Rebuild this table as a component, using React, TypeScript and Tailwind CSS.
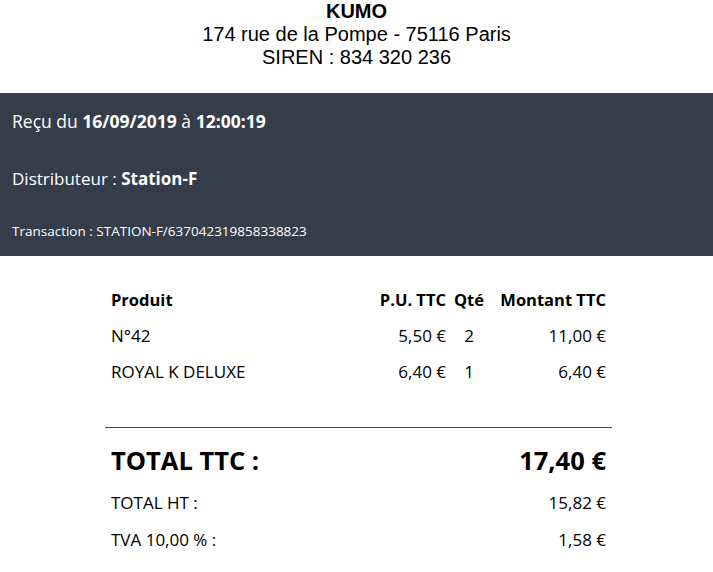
const items = [
  { name: "N°42", pu: "5,50 €", qty: "2", total: "11,00 €" },
  { name: "ROYAL K DELUXE", pu: "6,40 €", qty: "1", total: "6,40 €" },
];

const body = { fontFamily: "'Open Sans', Lato, sans-serif" };

const App = () => {
  return (
    <div className="w-[713px] h-[572px] bg-white text-black overflow-hidden">
      <div
        className="flex flex-col items-center text-[20px] leading-[23px]"
        style={{ fontFamily: "'Liberation Sans', Arial, sans-serif" }}
      >
        <p className="font-bold">KUMO</p>
        <p>174 rue de la Pompe - 75116 Paris</p>
        <p>SIREN : 834 320 236</p>
      </div>

      <div className="mt-[24px] bg-[#343d4a] text-white px-3 h-[163px]" style={body}>
        <p className="leading-[57px] text-[17.5px]">
          Reçu du <span className="font-bold">16/09/2019</span> à <span className="font-bold">12:00:19</span>
        </p>
        <p className="leading-[58px] text-[17px]">
          Distributeur : <span className="font-bold">Station-F</span>
        </p>
        <p className="leading-[46px] text-[13.5px]">Transaction : STATION-F/637042319858338823</p>
      </div>

      <div className="ml-[105px] w-[507px]" style={body}>
        <div className="px-[6px] pt-[26px] text-[17px] leading-[36px]">
          <div className="grid grid-cols-[1fr_80px_46px_114px] font-bold text-[16.5px]">
            <span>Produit</span>
            <span className="text-right">P.U. TTC</span>
            <span className="text-center">Qté</span>
            <span className="text-right">Montant TTC</span>
          </div>
          {items.map((it) => (
            <div key={it.name} className="grid grid-cols-[1fr_80px_46px_114px]">
              <span>{it.name}</span>
              <span className="text-right">{it.pu}</span>
              <span className="text-center">{it.qty}</span>
              <span className="text-right">{it.total}</span>
            </div>
          ))}
        </div>
        <div className="mt-[37px] border-t border-[#444]" />
        <div className="px-[6px]">
          <div className="flex justify-between leading-[64px] text-[25.5px] font-bold">
            <span>TOTAL TTC :</span>
            <span>17,40 €</span>
          </div>
          <div className="flex justify-between leading-[21px] text-[17px]">
            <span>TOTAL HT :</span>
            <span>15,82 €</span>
          </div>
          <div className="flex justify-between leading-[37px] mt-[8px] text-[17px]">
            <span>TVA 10,00 % :</span>
            <span>1,58 €</span>
          </div>
        </div>
      </div>
    </div>
  );
};

export default App;
